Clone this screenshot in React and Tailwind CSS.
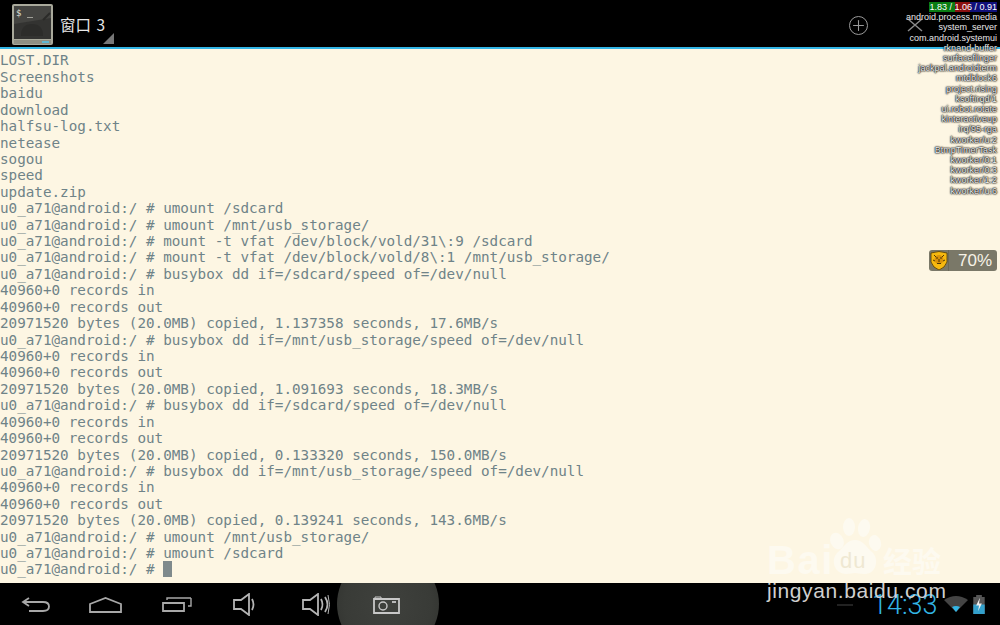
import { Plus } from 'lucide-react';

const lines = [
  'LOST.DIR',
  'Screenshots',
  'baidu',
  'download',
  'halfsu-log.txt',
  'netease',
  'sogou',
  'speed',
  'update.zip',
  'u0_a71@android:/ # umount /sdcard',
  'u0_a71@android:/ # umount /mnt/usb_storage/',
  'u0_a71@android:/ # mount -t vfat /dev/block/vold/31\\:9 /sdcard',
  'u0_a71@android:/ # mount -t vfat /dev/block/vold/8\\:1 /mnt/usb_storage/',
  'u0_a71@android:/ # busybox dd if=/sdcard/speed of=/dev/null',
  '40960+0 records in',
  '40960+0 records out',
  '20971520 bytes (20.0MB) copied, 1.137358 seconds, 17.6MB/s',
  'u0_a71@android:/ # busybox dd if=/mnt/usb_storage/speed of=/dev/null',
  '40960+0 records in',
  '40960+0 records out',
  '20971520 bytes (20.0MB) copied, 1.091693 seconds, 18.3MB/s',
  'u0_a71@android:/ # busybox dd if=/sdcard/speed of=/dev/null',
  '40960+0 records in',
  '40960+0 records out',
  '20971520 bytes (20.0MB) copied, 0.133320 seconds, 150.0MB/s',
  'u0_a71@android:/ # busybox dd if=/mnt/usb_storage/speed of=/dev/null',
  '40960+0 records in',
  '40960+0 records out',
  '20971520 bytes (20.0MB) copied, 0.139241 seconds, 143.6MB/s',
  'u0_a71@android:/ # umount /mnt/usb_storage/',
  'u0_a71@android:/ # umount /sdcard',
];

const procsOnBar = ['android.process.media', 'system_server', 'com.android.systemui'];
const procs = [
  'rknand-buffer',
  'surfaceflinger',
  'jackpal.androidterm',
  'mtdblock6',
  'project.rising',
  'ksoftirqd/1',
  'ui.robot.rotate',
  'kinteractiveup',
  'irq/95-rga',
  'kworker/u:2',
  'BtmpTimerTask',
  'kworker/0:1',
  'kworker/0:3',
  'kworker/1:2',
  'kworker/u:6',
];

function TerminalIcon() {
  return (
    <svg width="41" height="42" viewBox="0 0 41 42">
      <rect x="0" y="0" width="41" height="41" rx="2" fill="#a9a99b" />
      <rect x="2" y="2" width="37" height="33" fill="#333331" />
      <path d="M2 2h37v12L2 20z" fill="#444441" />
      <path d="M31 16l7-7" stroke="#2b2b29" strokeWidth="2" fill="none" />
      <path d="M9 32q0-12 11-12t11 12z" fill="#2c2c2a" />
      <rect x="2" y="36" width="37" height="4" fill="#8f8f83" />
      <rect x="30" y="37" width="7" height="2" fill="#5fb6d2" />
      <rect x="15" y="13" width="6" height="1" fill="#a0a098" />
      <text x="4" y="12" fontSize="9" fill="#e0e0d8" fontFamily="'DejaVu Sans Mono', monospace">$</text>
    </svg>
  );
}

function BackIcon() {
  return (
    <svg width="29" height="15" viewBox="0 0 29 15" fill="none" stroke="#a8a8a8" strokeWidth="1.800">
      <path d="M8 1L2 5l6 4" />
      <path d="M2 5h20q6 0 6 4.500T22 14H8" />
    </svg>
  );
}

function HomeIcon() {
  return (
    <svg width="33" height="16" viewBox="0 0 33 16" fill="none" stroke="#a8a8a8" strokeWidth="1.800">
      <path d="M1 7L16.500 1 32 7v8H1z" />
    </svg>
  );
}

function RecentIcon() {
  return (
    <svg width="30" height="15" viewBox="0 0 30 15" fill="none" stroke="#a8a8a8" strokeWidth="1.800">
      <path d="M1 6h21v8H1z" />
      <path d="M5 3V1h24M29 1v8h-3" strokeWidth="1.400" />
    </svg>
  );
}

function VolumeIcon({ waves }) {
  return (
    <svg width={waves ? 29 : 25} height="23" viewBox={waves ? '0 0 29 23' : '0 0 25 23'} fill="none" stroke="#b4b4b4" strokeWidth="1.800">
      <path d="M1 7h7l8-6v21l-8-6H1z" />
      <path d="M19 6q3 5.500 0 11" />
      {waves && <path d="M23 4q5 7.500 0 15" />}
      {waves && <path d="M26 2q3 9.500 0 19" strokeWidth="1" />}
    </svg>
  );
}

function CameraIcon() {
  return (
    <svg width="27" height="18" viewBox="0 0 27 18" fill="none" stroke="#c8c8c8" strokeWidth="1.800">
      <path d="M1 3h25v14H1z" />
      <path d="M2 3V1h6v2" strokeWidth="1" />
      <circle cx="10" cy="10" r="4" strokeWidth="1.400" />
      <path d="M19 6h4" />
    </svg>
  );
}

function LionBadge() {
  return (
    <svg width="18" height="19" viewBox="0 0 18 19">
      <path d="M1 2q8-3 16 0v9q-2 6-8 8-6-2-8-8z" fill="#f6b90f" stroke="#4f3a08" strokeWidth="0.800" />
      <circle cx="9" cy="8.500" r="4.500" fill="#d9920a" />
      <path d="M6 7h2M10 7h2M9 8v3M7 12.500h4M4 4l2 2M14 4l-2 2M3 9l2 1M15 9l-2 1" stroke="#3d2a05" strokeWidth="0.900" />
    </svg>
  );
}

function WatermarkLogo() {
  return (
    <div className="absolute left-[768px] top-[518px] w-[180px] h-[76px] pointer-events-none text-[#fdfaf0]">
      <svg className="absolute left-[60px] top-0" width="55" height="58" viewBox="0 0 55 58" fill="currentColor">
        <ellipse cx="9" cy="23" rx="6.500" ry="8.500" transform="rotate(-25 9 23)" />
        <ellipse cx="21" cy="9" rx="6" ry="9" />
        <ellipse cx="36" cy="10" rx="6" ry="9" transform="rotate(10 36 10)" />
        <ellipse cx="47" cy="25" rx="6" ry="8" transform="rotate(-15 47 25)" />
        <path d="M27 22c8 0 10 6 17 12 8 7 4 23-8 22-4 0-6-1-9-1s-5 1-9 1C6 56 2 41 10 34c7-6 9-12 17-12z" />
      </svg>
      <span className="absolute left-[-1px] top-[24px] text-[40px] leading-[36px] font-bold font-['Liberation_Sans',sans-serif] tracking-[1.500px]">Bai</span>
      <span className="absolute left-[72px] top-[31px] text-[22px] leading-[24px] font-['Liberation_Sans',sans-serif] text-[#efe8d2] tracking-[1px]">du</span>
      <span className="absolute left-[115px] top-[23px] text-[29px] leading-[38px] font-bold font-['Noto_Sans_CJK_SC',sans-serif] whitespace-nowrap">经验</span>
    </div>
  );
}

function LoadOverlay() {
  return (
    <div className="absolute right-[3px] top-[2px] flex flex-col items-end text-[9px] leading-[10.200px] font-['Liberation_Sans',sans-serif] whitespace-nowrap">
      <div className="relative text-white h-[10.200px] w-[68px] flex">
        <span className="bg-[#0a7d14] w-[26px]" />
        <span className="bg-[#8a1010] w-[15px]" />
        <span className="bg-[#10107a] w-[27px]" />
        <span className="absolute inset-0 text-right">1.83 / 1.06 / 0.91</span>
      </div>
      {procsOnBar.map((p) => (
        <span key={p} className="text-[#e8e8e8]">{p}</span>
      ))}
      {procs.map((p) => (
        <span key={p} className="text-[#eeeeee] [text-shadow:0_0_2px_#000,0_0_2px_#000,0_0_1px_#000]">{p}</span>
      ))}
    </div>
  );
}

export default function App() {
  return (
    <div className="relative w-[1000px] h-[625px] overflow-hidden flex flex-col bg-black">
      <header className="h-[47px] flex items-center bg-black shrink-0">
        <div className="ml-[12px] mt-[3px]">
          <TerminalIcon />
        </div>
        <div className="relative ml-[7px] w-[54px] h-[47px] flex items-center">
          <span className="text-[15.500px] text-[#e8e8e8] font-['Noto_Sans_CJK_SC',sans-serif] whitespace-pre [word-spacing:2px] mt-[3px]">窗口 3</span>
          <span className="absolute right-0 bottom-[3px] w-[11px] h-[11px] bg-[#777] [clip-path:polygon(100%_0,100%_100%,0_100%)]" />
        </div>
        <Plus
          className="ml-[735px] mt-[3px] text-[#9a9a9a] border-[1.500px] border-[#9a9a9a] rounded-full"
          size={19}
          strokeWidth={1.500}
        />
        <svg className="ml-[39px] mt-[3px]" width="16" height="14" viewBox="0 0 16 14" stroke="#8a8a8a" strokeWidth="1.500">
          <path d="M1 1l14 12M15 1L1 13" />
        </svg>
      </header>
      <div className="h-[2px] bg-[#33b5e5] shrink-0" />
      <main className="h-[534px] shrink-0 bg-[#fdf6e3] text-[#6f8388] font-['DejaVu_Sans_Mono',monospace] text-[14.270px] leading-[16.420px] pt-[3.400px] whitespace-pre">
        {lines.map((line, i) => (
          <div key={i}>{line}</div>
        ))}
        <div>
          u0_a71@android:/ # <span className="inline-block w-[8.500px] h-[16px] bg-[#7f8a8c] align-top" />
        </div>
      </main>
      <footer className="relative h-[42px] shrink-0 bg-black flex items-center overflow-hidden">
        <div className="absolute left-[337px] top-[-30px] w-[102px] h-[102px] rounded-full bg-[radial-gradient(circle,#3f413d_0%,#393b37_60%,#2c2d2a_100%)]" />
        <div className="relative flex items-center pl-[21px] mt-[1px]">
          <BackIcon />
          <div className="ml-[39px]"><HomeIcon /></div>
          <div className="ml-[40px]"><RecentIcon /></div>
          <div className="ml-[41px]"><VolumeIcon /></div>
          <div className="ml-[44px]"><VolumeIcon waves /></div>
          <div className="ml-[42px]"><CameraIcon /></div>
        </div>
        <div className="absolute left-[837px] top-[21px] w-[16px] h-[2px] bg-[#222]" />
        <span className="absolute left-[872px] top-[6px] text-[#33b5e5] text-[27px] leading-[32px] font-['Roboto',sans-serif] font-light">14:33</span>
        <svg className="absolute left-[944px] top-[13px]" width="24" height="16" viewBox="0 0 24 16">
          <path d="M0 4q12-8 24 0L12 16z" fill="#444" />
          <path d="M8 11q4-2 8 0l-4 5z" fill="#33b5e5" />
        </svg>
        <svg className="absolute left-[972px] top-[12px]" width="14" height="19" viewBox="0 0 14 20">
          <path d="M4 0h6v2h3v18H1V2h3z" fill="#555" />
          <path d="M1 10h12v10H1z" fill="#33a0cc" />
          <path d="M8 3L4 11h3l-1 6 4-8H7z" fill="#eee" />
        </svg>
      </footer>

      <WatermarkLogo />
      <span className="absolute left-[767px] top-[578px] text-[21px] leading-[26px] text-[#cfcfcf] font-['Liberation_Sans',sans-serif] tracking-[0.600px] whitespace-nowrap">
        jingyan.baidu.com
      </span>
      <LoadOverlay />
      <div className="absolute left-[929px] top-[250px] w-[68px] h-[21px] rounded-[3px] bg-[#7a7868] flex items-center">
        <div className="w-[20px] flex justify-center border-r border-[#6a6858] h-full items-center">
          <LionBadge />
        </div>
        <span className="ml-[9px] text-[17px] text-[#f6f2e6] font-['Liberation_Sans',sans-serif]">70%</span>
      </div>
    </div>
  );
}
